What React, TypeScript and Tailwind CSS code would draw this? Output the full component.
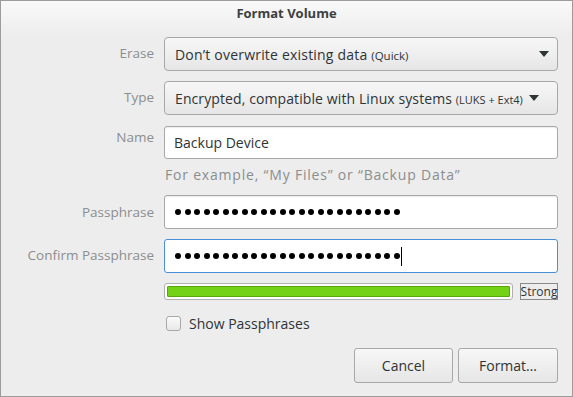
import React from "react";

const font = { fontFamily: '"Open Sans", "Noto Sans", sans-serif' };

function Arrow() {
  return (
    <svg width="10" height="6" viewBox="0 0 10 6" className="shrink-0">
      <path d="M0 0 H10 L5 6 Z" fill="#2e3436" />
    </svg>
  );
}

function Dots({ n }: { n: number }) {
  return (
    <div className="flex items-center gap-[3.5px]">
      {Array.from({ length: n }).map((_, i) => (
        <span key={i} className="block w-[6px] h-[6px] rounded-full bg-black" />
      ))}
    </div>
  );
}

export default function App() {
  return (
    <div
      className="w-[573px] h-[397px] bg-[#ededed] border border-[#9c9c9c] flex flex-col text-[14px] text-[#2e3436] overflow-hidden"
      style={font}
    >
      <div className="h-[36px] shrink-0 flex justify-center pt-[3px] bg-gradient-to-b from-[#f9f9f9] to-[#ededed]">
        <span className="font-bold text-[13px] text-[#3c4042]">Format Volume</span>
      </div>

      <div className="flex flex-col pl-[163px] pr-[14px]">
        {/* Erase */}
        <div className="relative h-[34px] flex">
          <span className="absolute right-full mr-[10px] top-[6px] text-[13.5px] text-[#8b8e8f] whitespace-nowrap">Erase</span>
          <div className="flex-1 flex items-center justify-between pl-[10px] pr-[8px] rounded-[4px] border border-[#a8a8a8] bg-gradient-to-b from-[#f7f7f7] to-[#e6e6e6]">
            <span className="whitespace-nowrap tracking-[0.2px]">
              Don’t overwrite existing data <span className="text-[11.5px] tracking-normal">(Quick)</span>
            </span>
            <Arrow />
          </div>
        </div>
        {/* Type */}
        <div className="relative h-[34px] flex mt-[10px]">
          <span className="absolute right-full mr-[10px] top-[6px] text-[13.5px] text-[#8b8e8f] whitespace-nowrap">Type</span>
          <div className="flex-1 flex items-center justify-between pl-[10px] pr-[18px] rounded-[4px] border border-[#a8a8a8] bg-gradient-to-b from-[#f7f7f7] to-[#e6e6e6]">
            <span className="whitespace-nowrap tracking-[0.1px]">
              Encrypted, compatible with Linux systems <span className="text-[11px] tracking-normal">(LUKS + Ext4)</span>
            </span>
            <Arrow />
          </div>
        </div>
        {/* Name */}
        <div className="relative h-[33px] flex mt-[11px]">
          <span className="absolute right-full mr-[10px] top-[1px] text-[13.5px] text-[#8b8e8f] whitespace-nowrap">Name</span>
          <div className="flex-1 flex items-center pl-[9px] rounded-[3px] border border-[#a8a8a8] bg-white shadow-[inset_0_1px_1px_rgba(0,0,0,0.08)]">
            <span>Backup Device</span>
          </div>
        </div>
        <div className="h-[36px] pt-[5px] text-[#8b8e8f] pl-[1px] tracking-[0.8px] whitespace-nowrap">
          For example, “My Files” or “Backup Data”
        </div>
        {/* Passphrase */}
        <div className="relative h-[34px] flex">
          <span className="absolute right-full mr-[10px] top-[7px] text-[13.5px] text-[#8b8e8f] whitespace-nowrap">Passphrase</span>
          <div className="flex-1 flex items-center pl-[10px] rounded-[3px] border border-[#a8a8a8] bg-white shadow-[inset_0_1px_1px_rgba(0,0,0,0.08)]">
            <Dots n={24} />
          </div>
        </div>
        {/* Confirm */}
        <div className="relative h-[34px] flex mt-[10px]">
          <span className="absolute right-full mr-[10px] top-[6px] text-[13.5px] text-[#8b8e8f] whitespace-nowrap">Confirm Passphrase</span>
          <div className="flex-1 flex items-center pl-[10px] rounded-[3px] border border-[#4a90d9] bg-white">
            <Dots n={24} />
            <span className="block w-px h-[19px] bg-black ml-[1px]" />
          </div>
        </div>
        {/* Strength */}
        <div className="h-[17px] flex mt-[10px] gap-[7px]">
          <div className="flex-1 rounded-[3px] border border-[#b0b0b0] bg-white p-[2px]">
            <div className="h-full rounded-[1px] bg-[#73d216] border border-[#5aa50e]" />
          </div>
          <div className="w-[38px] border border-[#8a8a8a] flex items-center justify-center text-[12px] leading-none text-[#2e3436]">
            Strong
          </div>
        </div>
        {/* Checkbox */}
        <div className="flex items-center mt-[13px] pl-[2px] gap-[8px]">
          <span className="block w-[15px] h-[15px] rounded-[3px] border border-[#a8a8a8] bg-gradient-to-b from-[#fbfbfb] to-[#e8e8e8]" />
          <span>Show Passphrases</span>
        </div>
        {/* Buttons */}
        <div className="flex justify-end gap-[5px] mt-[14px]">
          <div className="w-[99px] h-[35px] flex items-center justify-center rounded-[3px] border border-[#a8a8a8] bg-gradient-to-b from-[#f7f7f7] to-[#e6e6e6]">
            Cancel
          </div>
          <div className="w-[100px] h-[35px] flex items-center justify-center rounded-[3px] border border-[#a8a8a8] bg-gradient-to-b from-[#f7f7f7] to-[#e6e6e6]">
            Format…
          </div>
        </div>
      </div>
    </div>
  );
}
